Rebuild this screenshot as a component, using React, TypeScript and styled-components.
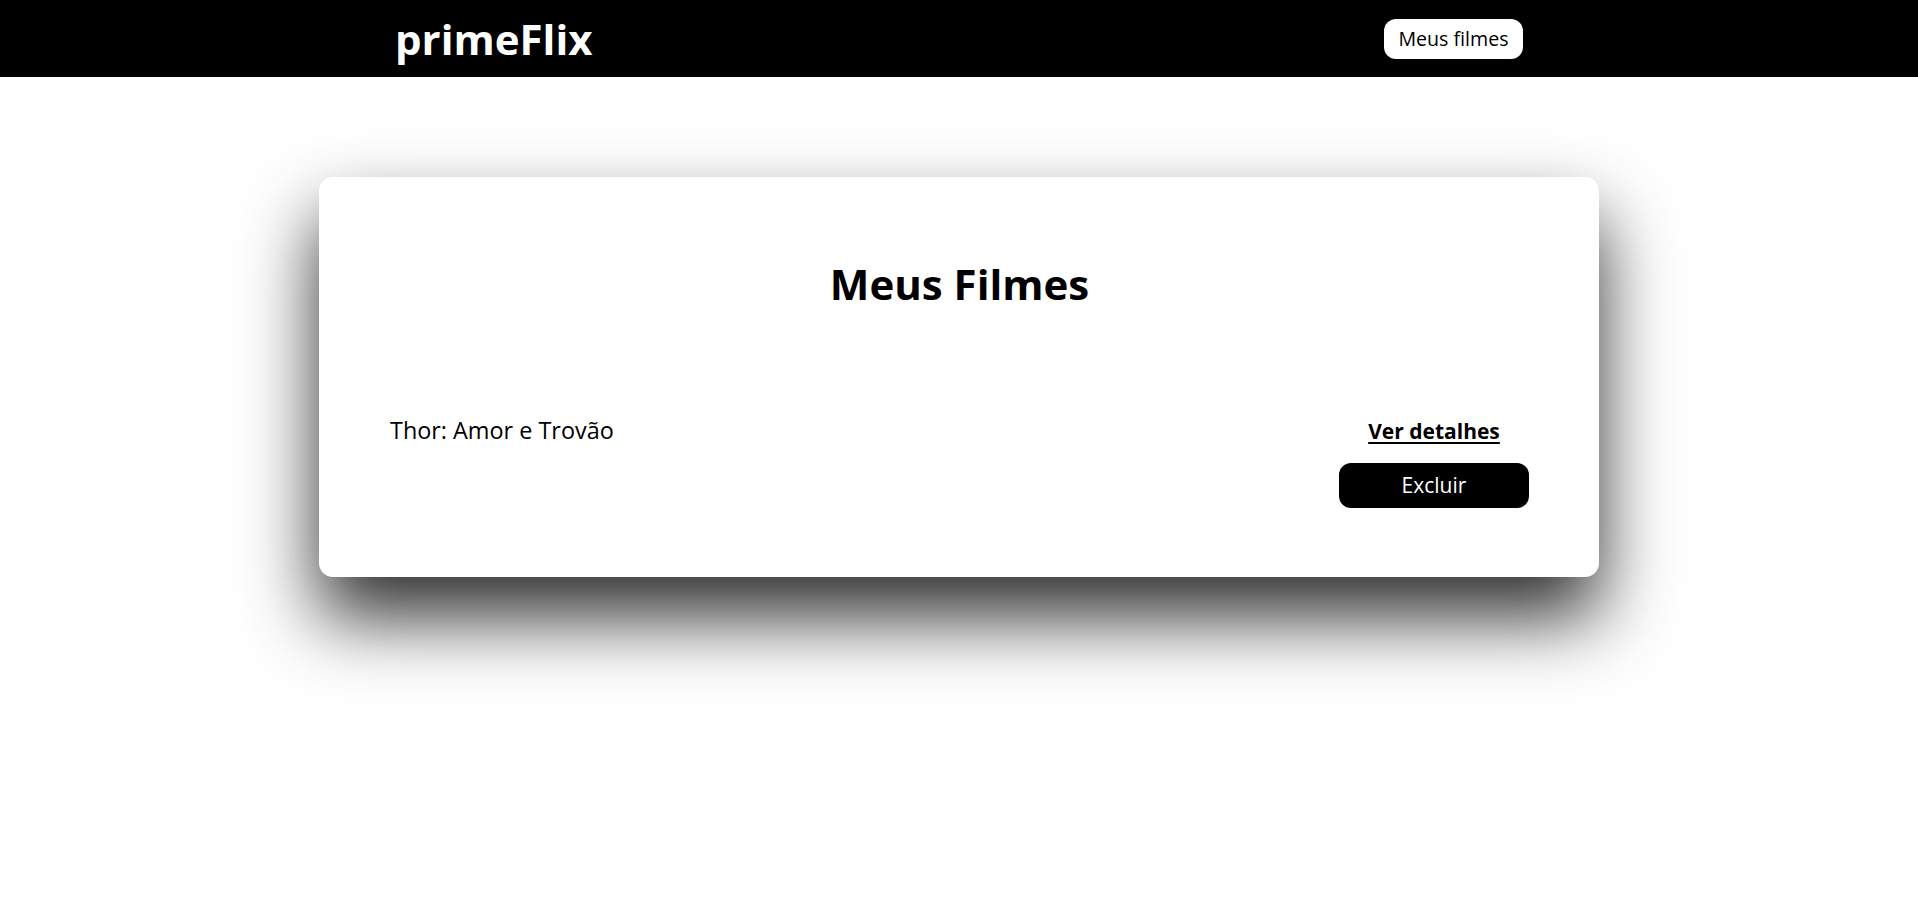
import React from "react";
import styled, { createGlobalStyle } from "styled-components";

const GlobalStyle = createGlobalStyle`
  * { box-sizing: border-box; }
  html, body {
    margin: 0;
    background: #fff;
    font-family: "Open Sans", "Noto Sans", sans-serif;
    color: #000;
  }
  #root {
    min-height: 100vh;
  }
`;

const Header = styled.header`
  height: 77px;
  background: #000;
  display: flex;
  align-items: center;
`;

const HeaderInner = styled.div`
  width: 1128px;
  margin: 0 auto;
  display: flex;
  align-items: center;
  justify-content: space-between;
`;

const Logo = styled.a`
  color: #fff;
  font-size: 42px;
  font-weight: 700;
  text-decoration: none;
  line-height: 1;
`;

const NavButton = styled.a`
  display: inline-flex;
  align-items: center;
  justify-content: center;
  width: 139px;
  height: 40px;
  background: #fff;
  color: #000;
  border-radius: 12px;
  font-size: 19.6px;
  font-weight: 500;
  text-decoration: none;
`;

const Main = styled.main`
  padding: 100px 0 120px;
  display: flex;
  justify-content: center;
`;

const Card = styled.section`
  width: 1280px;
  min-height: 400px;
  background: #fff;
  border-radius: 14px;
  box-shadow: 0 40px 75px rgba(0, 0, 0, 0.82);
  padding: 82px 70px 66px 71px;
`;

const Title = styled.h1`
  margin: 0 0 106px;
  text-align: center;
  font-size: 42px;
  font-weight: 700;
  line-height: 1.2;
`;

const List = styled.ul`
  list-style: none;
  margin: 0;
  padding: 0;
`;

const Item = styled.li`
  display: flex;
  justify-content: space-between;
  align-items: flex-start;
`;

const MovieName = styled.span`
  font-size: 23.4px;
  line-height: 1.3;
`;

const Actions = styled.div`
  display: flex;
  flex-direction: column;
  align-items: center;
  gap: 17px;
`;

const DetailsLink = styled.a`
  margin-top: 3px;
  color: #000;
  font-size: 21px;
  font-weight: 700;
  text-decoration: underline;
  text-underline-offset: 3px;
  line-height: 1.3;
`;

const DeleteButton = styled.button`
  width: 190px;
  height: 45px;
  border: none;
  border-radius: 12px;
  background: #000;
  color: #fff;
  font-family: inherit;
  font-size: 21px;
  cursor: pointer;
`;

export default function App() {
  return (
    <>
      <GlobalStyle />
      <Header>
        <HeaderInner>
          <Logo href="#">primeFlix</Logo>
          <NavButton href="#">Meus filmes</NavButton>
        </HeaderInner>
      </Header>
      <Main>
        <Card>
          <Title>Meus Filmes</Title>
          <List>
            <Item>
              <MovieName>Thor: Amor e Trovão</MovieName>
              <Actions>
                <DetailsLink href="#">Ver detalhes</DetailsLink>
                <DeleteButton>Excluir</DeleteButton>
              </Actions>
            </Item>
          </List>
        </Card>
      </Main>
    </>
  );
}
